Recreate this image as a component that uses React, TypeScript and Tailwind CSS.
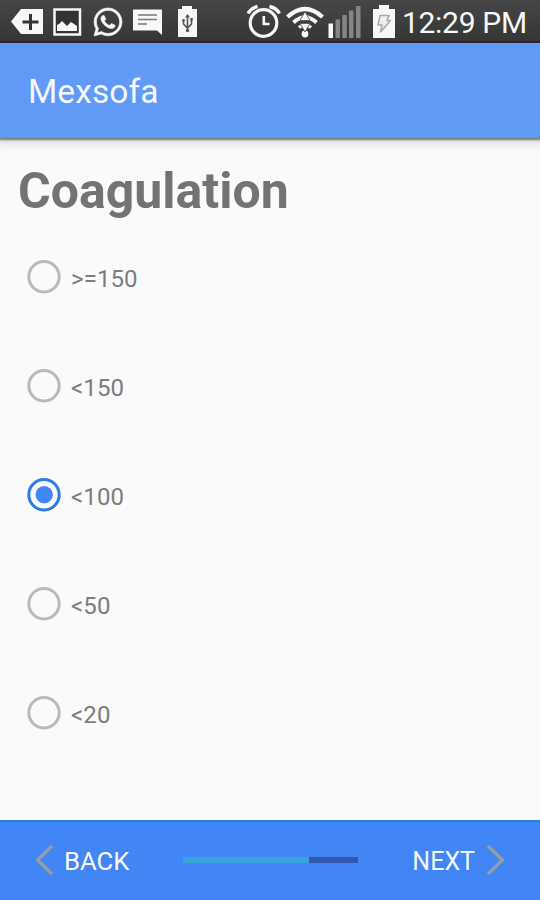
import { useState } from "react";
import { FaWhatsapp } from "react-icons/fa";

const options = [">=150", "<150", "<100", "<50", "<20"];

function StatusBar() {
  return (
    <header className="flex h-[43px] shrink-0 items-start border-b-2 border-[#2b2726] bg-gradient-to-b from-[#464646] to-[#363636] text-[#f7f7f7]">
      <svg className="ml-[11px] h-[41px] w-8" viewBox="0 0 32 41">
        <path d="M10 9H32V34H10L0 21.5Z" fill="currentColor" />
        <path d="M19.5 14V30M11.5 22H27.5" stroke="#353535" strokeWidth="3" />
      </svg>
      <svg className="ml-[10px] h-[41px] w-[29px]" viewBox="0 0 29 41">
        <rect x="1.5" y="9.5" width="25.5" height="25" fill="#333" stroke="currentColor" strokeWidth="2.5" />
        <path d="M4 31V25L6 24L9 21L14 26L18 22L24 26V31Z" fill="currentColor" />
      </svg>
      <FaWhatsapp className="mt-[6px] ml-[10px] size-[32px]" stroke="currentColor" strokeWidth="10" />
      <svg className="ml-[9px] h-[41px] w-[30px]" viewBox="0 0 30 41">
        <path d="M0 9.5H29V35L24 30.5H0Z" fill="currentColor" />
        <path d="M5 15H24M5 19.5H24M5 24H14" stroke="#777" strokeWidth="1.6" />
      </svg>
      <svg className="ml-[14px] h-[41px] w-[21px]" viewBox="0 0 21 41">
        <path d="M5 6H15V9H20V37H1V9H5Z" fill="currentColor" />
        <path d="M10.5 15V31M6.5 20V24L10.5 28L14.5 24V19" fill="none" stroke="#555" strokeWidth="1.6" />
        <path d="M8 17.5L10.5 14L13 17.5Z" fill="#555" />
        <circle cx="10.5" cy="30.5" r="1.7" fill="#555" />
        <path d="M5.3 19H7.7V21.5H5.3ZM13.3 18H15.7V20.5H13.3Z" fill="#555" />
      </svg>
      <svg className="ml-[49px] h-[41px] w-[34px]" viewBox="0 0 34 41" fill="none" stroke="currentColor">
        <circle cx="16.5" cy="23" r="13.3" strokeWidth="3.2" />
        <path d="M16.8 16V24H22.5" strokeWidth="2.6" />
        <path d="M1 13.5Q4 8 10.5 6.5M22.5 6.5Q29.5 8 32.5 13.5" strokeWidth="3.4" />
      </svg>
      <svg className="ml-[5px] h-[41px] w-[38px]" viewBox="0 0 38 41" fill="none" stroke="currentColor">
        <path d="M1.5 17Q19 1 36.5 17" strokeWidth="4.2" />
        <path d="M7.5 22.5Q19 12 30.5 22.5" strokeWidth="4" />
        <path d="M13 27.5Q19 22.5 25 27.5" strokeWidth="3.5" />
        <circle cx="19" cy="34" r="3.4" fill="currentColor" stroke="none" />
        <path d="M19 11.5L24 20.5H14ZM19 32L14 23.5H24Z" fill="currentColor" stroke="#4d4d4d" strokeWidth="0.8" />
      </svg>
      <svg className="ml-1 h-[41px] w-[34px]" viewBox="0 0 34 41">
        <path d="M0.5 23.5H5V38H0.5Z" fill="currentColor" />
        <path d="M7.5 19.5H12V38H7.5ZM14.3 15H18.8V38H14.3ZM21 10.5H25.5V38H21ZM28 6H32.5V38H28Z" fill="#858585" />
      </svg>
      <svg className="ml-[11px] h-[41px] w-[22px]" viewBox="0 0 22 41">
        <path d="M6 5H16V9H22V38H0V9H6Z" fill="currentColor" />
        <path d="M7 15.5H16L14 20.5H17.5L7.5 32L9 25H5Z" fill="#eee" stroke="#aaa" strokeWidth="1.6" strokeLinejoin="round" />
      </svg>
      <span className="mt-[5px] ml-[7px] text-[30px] leading-9 tracking-[-0.3px] whitespace-nowrap">12:29 PM</span>
    </header>
  );
}

export default function App() {
  const [selected, setSelected] = useState(2);

  return (
    <div className="flex h-[900px] w-[540px] flex-col overflow-hidden bg-[#fafafa] font-['Roboto',sans-serif]">
      <StatusBar />
      <div className="flex h-[95px] shrink-0 items-center bg-[#6199f6] pl-7 shadow-[0_1px_2px_1px_rgba(0,0,0,0.5),0_4px_8px_4px_rgba(0,0,0,0.08)] [clip-path:inset(0_0_-20px_0)]">
        <h1 className="mt-[3px] text-[33.5px] leading-10 tracking-[0.1px] text-[#f5f9ff]">Mexsofa</h1>
      </div>
      <main className="flex-1 pt-[23px]">
        <h2 className="pl-[18px] text-[50px] leading-[60px] font-bold text-[#737373]">Coagulation</h2>
        <div className="mt-[2px]">
          {options.map((label, i) => (
            <label key={label} className="flex h-[109px] cursor-pointer items-start pt-[37px] pl-[27px]">
              <input
                className="sr-only"
                type="radio"
                name="coagulation"
                checked={selected === i}
                onChange={() => setSelected(i)}
              />
              <svg className="size-[34px]" viewBox="0 0 34 34">
                <circle cx="17" cy="16.7" r="15.2" fill="none" stroke={selected === i ? "#2a7bf0" : "#b9b9b9"} strokeWidth="3" />
                {selected === i && <circle cx="17.2" cy="16.7" r="8.7" fill="#4285f4" />}
              </svg>
              <span className="mt-[4px] ml-[10px] text-[24px] leading-[30px] tracking-[0.1px] text-[#7d7d7d]">{label}</span>
            </label>
          ))}
        </div>
      </main>
      <footer className="flex h-20 shrink-0 items-center border-t-2 border-[#217fe3] bg-[#4285f4] text-[25px] text-[#f5f9ff]">
        <button className="ml-[35px] flex items-center">
          <svg className="mb-[2px] h-8 w-[19px]" viewBox="0 0 19 32">
            <path d="M17 2L2.5 16L17 30" fill="none" stroke="#9a9ca4" strokeWidth="3.2" />
          </svg>
          <span className="ml-[10px] text-[25.7px]">BACK</span>
        </button>
        <div className="mb-[2px] ml-auto h-[6px] w-[175px] bg-[#3059ad]">
          <div className="h-full w-[126px] bg-[#35a7db]" />
        </div>
        <button className="mr-[35px] ml-[54px] flex items-center">
          <span className="mt-[2px]">NEXT</span>
          <svg className="mb-[2px] ml-[11px] h-8 w-[19px]" viewBox="0 0 19 32">
            <path d="M2 2L16.5 16L2 30" fill="none" stroke="#9a9ca4" strokeWidth="3.2" />
          </svg>
        </button>
      </footer>
    </div>
  );
}
